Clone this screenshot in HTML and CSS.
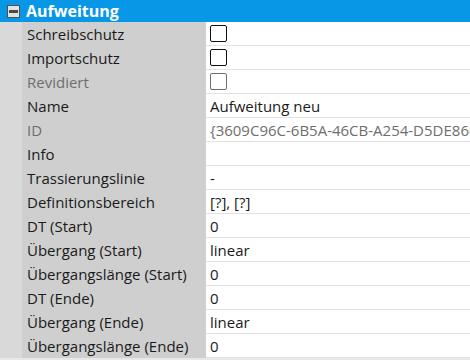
FILE: index.html
```html
<!DOCTYPE html>
<html lang="de">
<head>
    <meta charset="UTF-8">
    <title>Eigenschaften</title>
    <link rel="stylesheet" href="styles.css">
</head>
<body>
    <div class="grid">
        <div class="cat">
            <span class="toggle"></span>
            <span class="cat-title">Aufweitung</span>
        </div>
        <div class="row"><div class="gut"></div><div class="lbl">Schreibschutz</div><div class="val"><span class="check"></span></div></div>
        <div class="row"><div class="gut"></div><div class="lbl">Importschutz</div><div class="val"><span class="check"></span></div></div>
        <div class="row"><div class="gut"></div><div class="lbl dim">Revidiert</div><div class="val"><span class="check off"></span></div></div>
        <div class="row"><div class="gut"></div><div class="lbl">Name</div><div class="val">Aufweitung neu</div></div>
        <div class="row"><div class="gut"></div><div class="lbl dim">ID</div><div class="val dim">{3609C96C-6B5A-46CB-A254-D5DE866A1F20}</div></div>
        <div class="row"><div class="gut"></div><div class="lbl">Info</div><div class="val"></div></div>
        <div class="row"><div class="gut"></div><div class="lbl">Trassierungslinie</div><div class="val">-</div></div>
        <div class="row"><div class="gut"></div><div class="lbl">Definitionsbereich</div><div class="val">[?], [?]</div></div>
        <div class="row"><div class="gut"></div><div class="lbl">DT (Start)</div><div class="val">0</div></div>
        <div class="row"><div class="gut"></div><div class="lbl">Übergang (Start)</div><div class="val">linear</div></div>
        <div class="row"><div class="gut"></div><div class="lbl">Übergangslänge (Start)</div><div class="val">0</div></div>
        <div class="row"><div class="gut"></div><div class="lbl">DT (Ende)</div><div class="val">0</div></div>
        <div class="row"><div class="gut"></div><div class="lbl">Übergang (Ende)</div><div class="val">linear</div></div>
        <div class="row"><div class="gut"></div><div class="lbl">Übergangslänge (Ende)</div><div class="val">0</div></div>
    </div>
</body>
</html>
```

FILE: styles.css
```css
body {
    margin: 0;
    padding: 0;
    background-color: #e8e8e8;
    font-family: "Open Sans", "Noto Sans", sans-serif;
    font-size: 15px;
    color: #1a1a1a;
}

.grid {
    width: 470px;
    height: 358px;
    overflow: hidden;
    background-color: #fff;
}

.cat {
    display: flex;
    align-items: center;
    height: 22px;
    padding-left: 7px;
    background-color: #0897e6;
}

.toggle {
    position: relative;
    width: 11px;
    height: 11px;
    border: 1px solid #505050;
    background-color: #e2e2e2;
}

.toggle::after {
    content: "";
    position: absolute;
    left: 1px;
    right: 1px;
    top: 4px;
    height: 3px;
    background-color: #4a4a4a;
}

.cat-title {
    margin-left: 6px;
    color: #fff;
    font-weight: bold;
    font-size: 16px;
}

.row {
    display: grid;
    grid-template-columns: 22px 184px 1fr;
    height: 24px;
}

.gut {
    background-color: #d9d9d9;
}

.lbl {
    display: flex;
    align-items: center;
    padding-left: 5px;
    background-color: #cfcfcf;
    white-space: nowrap;
}

.val {
    display: flex;
    align-items: center;
    padding-left: 4px;
    border-bottom: 1px solid #e2e2e2;
    white-space: nowrap;
    overflow: hidden;
}

.dim {
    color: #6e6e6e;
}

.check {
    width: 15px;
    height: 15px;
    border: 1.5px solid #111;
    border-radius: 2px;
    background-color: #fff;
}

.check.off {
    border-color: #6e6e6e;
}
```
